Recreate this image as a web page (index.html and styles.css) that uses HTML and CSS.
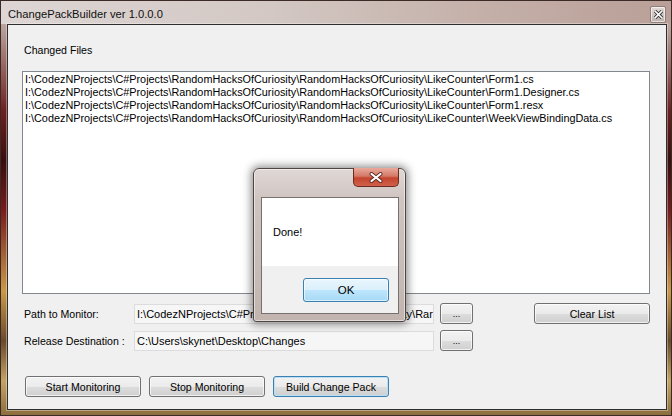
FILE: index.html
```html
<!DOCTYPE html>
<html lang="en">
<head>
    <meta charset="UTF-8">
    <title>ChangePackBuilder ver 1.0.0.0</title>
    <link rel="stylesheet" href="styles.css">
</head>
<body>

<div class="window">
    <!-- Title bar -->
    <div class="titlebar">
        <span class="title">ChangePackBuilder ver 1.0.0.0</span>
        <div class="tool-close">
            <svg width="9" height="9" viewBox="0 0 9 9">
                <path d="M1 1 L8 8 M8 1 L1 8" stroke="#3a3a3a" stroke-width="3.4" stroke-linecap="square"/>
                <path d="M1 1 L8 8 M8 1 L1 8" stroke="#ffffff" stroke-width="1.6" stroke-linecap="square"/>
            </svg>
        </div>
    </div>

    <div class="client">
        <div class="caption">Changed Files</div>

        <div class="listbox">
            <div>I:\CodezNProjects\C#Projects\RandomHacksOfCuriosity\RandomHacksOfCuriosity\LikeCounter\Form1.cs</div>
            <div>I:\CodezNProjects\C#Projects\RandomHacksOfCuriosity\RandomHacksOfCuriosity\LikeCounter\Form1.Designer.cs</div>
            <div>I:\CodezNProjects\C#Projects\RandomHacksOfCuriosity\RandomHacksOfCuriosity\LikeCounter\Form1.resx</div>
            <div>I:\CodezNProjects\C#Projects\RandomHacksOfCuriosity\RandomHacksOfCuriosity\LikeCounter\WeekViewBindingData.cs</div>
        </div>

        <div class="field-row first">
            <span class="field-label">Path to Monitor:</span>
            <div class="textbox">I:\CodezNProjects\C#Projects\RandomHacksOfCuriosity\Rar</div>
            <button class="btn browse">...</button>
            <button class="btn clear">Clear List</button>
        </div>

        <div class="field-row">
            <span class="field-label">Release Destination :</span>
            <div class="textbox">C:\Users\skynet\Desktop\Changes</div>
            <button class="btn browse">...</button>
        </div>

        <div class="actions">
            <button class="btn wide">Start Monitoring</button>
            <button class="btn wide">Stop Monitoring</button>
            <button class="btn wide default">Build Change Pack</button>
        </div>
    </div>
</div>

<!-- Message box over the main form -->
<div class="msgbox">
    <div class="msg-title">
        <div class="msg-close">
            <svg width="14" height="11" viewBox="0 0 14 11">
                <path d="M2.5 2 L11.5 9 M11.5 2 L2.5 9" stroke="#5a2a22" stroke-width="4" stroke-linecap="round"/>
                <path d="M2.5 2 L11.5 9 M11.5 2 L2.5 9" stroke="#ffffff" stroke-width="2.2" stroke-linecap="round"/>
            </svg>
        </div>
    </div>
    <div class="msg-client">
        <div class="msg-body">Done!</div>
        <div class="msg-foot">
            <button class="btn ok">OK</button>
        </div>
    </div>
</div>

</body>
</html>
```

FILE: styles.css
```css
/* Page / window frame */
body {
    margin: 0;
    width: 672px;
    height: 416px;
    overflow: hidden;
    position: relative;
    font-family: "Liberation Sans", Arial, sans-serif;
    font-size: 11px;
    color: #000;
    background: #2a1a18;
}

.window {
    width: 672px;
    height: 416px;
    box-sizing: border-box;
    border: 1px solid #3b2a26;
    background:
        linear-gradient(to bottom,
            #d2c7c3 0,
            #bba59e 24px,
            #6e2020 110px,
            #3a0e0e 160px,
            #7a1c1c 210px,
            #c99a48 290px,
            #6a4a2a 340px,
            #c4a464 380px,
            #8a6a3a 416px);
    display: flex;
    flex-direction: column;
}

.titlebar {
    height: 23px;
    display: flex;
    align-items: center;
    padding: 0 5px 0 7px;
    background: linear-gradient(to right, #ddd6d4 0, #d3c8c4 40%, #c5b1aa 70%, #b99f97 100%);
}

.title {
    font-size: 11.2px;
    color: #111;
    margin-top: 2px;
}

.tool-close {
    margin-left: auto;
    width: 14px;
    height: 15px;
    border: 1px solid #8e7f7a;
    border-radius: 2px;
    background: linear-gradient(to bottom, #e4dcd9, #bfb0ab);
    box-shadow: inset 0 0 0 1px rgba(255, 255, 255, 0.6);
    display: flex;
    align-items: center;
    justify-content: center;
    margin-top: 3px;
}

/* Client area */
.client {
    margin-left: 6px;
    width: 660px;
    height: 386px;
    box-sizing: border-box;
    border: 1px solid #2e2e2e;
    box-shadow: 0 0 0 1px rgba(255, 255, 255, 0.35);
    background: #f0f0f0;
    padding: 0 16px 0 14px;
}

.caption {
    margin-top: 18px;
    height: 14px;
    line-height: 14px;
    padding-left: 2px;
    font-size: 10.6px;
}

.listbox {
    margin-top: 14px;
    height: 223px;
    box-sizing: border-box;
    border: 1px solid #828790;
    background: #fff;
    padding: 1px 2px;
    font-size: 10.85px;
    line-height: 13px;
    white-space: nowrap;
    overflow: hidden;
}

/* Text fields */
.field-row {
    display: flex;
    align-items: flex-start;
    height: 21px;
    margin-top: 6px;
}
.field-row.first {
    margin-top: 9px;
}

.field-label {
    width: 112px;
    box-sizing: border-box;
    padding-left: 2px;
    line-height: 21px;
    font-size: 10.6px;
    margin-top: 1px;
}

.textbox {
    width: 300px;
    height: 20px;
    box-sizing: border-box;
    margin-top: 1px;
    border: 1px solid #dcdcdc;
    background: #f6f6f6;
    padding: 0 2px;
    line-height: 18px;
    white-space: nowrap;
    overflow: hidden;
}

/* Buttons, Win7 look */
.btn {
    font-family: "Liberation Sans", Arial, sans-serif;
    font-size: 10.6px;
    color: #000;
    height: 21px;
    padding: 0;
    border: 1px solid #707070;
    border-radius: 3px;
    background: linear-gradient(to bottom, #f2f2f2 0, #ebebeb 50%, #dddddd 51%, #cfcfcf 100%);
    box-shadow: inset 0 0 0 1px rgba(255, 255, 255, 0.7);
}

.browse {
    width: 33px;
    margin-left: 6px;
    font-size: 9px;
}

.clear {
    width: 116px;
    margin-left: 61px;
}

.actions {
    display: flex;
    gap: 8px;
    margin-top: 25px;
    padding-left: 3px;
}

.wide {
    width: 116px;
}

.btn.default {
    border-color: #3c7fb1;
    box-shadow: inset 0 0 0 1px #b8e0f6;
}

/* Message box */
.msgbox {
    position: absolute;
    left: 253px;
    top: 168px;
    width: 153px;
    height: 154px;
    box-sizing: border-box;
    border: 1px solid #4e4442;
    border-radius: 6px 6px 3px 3px;
    background: linear-gradient(to bottom, #e0d8d6 0, #cfc4c0 30px, #c2b5b0 100%);
    box-shadow: 0 0 8px 2px rgba(0, 0, 0, 0.45), inset 0 0 0 1px rgba(255, 255, 255, 0.5);
    padding: 0 6px 0 7px;
}

.msg-title {
    height: 28px;
    position: relative;
}

.msg-close {
    position: absolute;
    top: -1px;
    right: 0;
    width: 46px;
    height: 19px;
    box-sizing: border-box;
    border: 1px solid #6b2b22;
    border-top: none;
    border-radius: 0 0 5px 5px;
    background: linear-gradient(to bottom, #e9a99b 0, #d47a68 45%, #c4442e 55%, #d0614a 100%);
    display: flex;
    align-items: center;
    justify-content: center;
}

.msg-client {
    height: 117px;
    box-sizing: border-box;
    border: 1px solid #767170;
    background: #f0f0f0;
}

.msg-body {
    height: 68px;
    background: #fff;
    display: flex;
    align-items: center;
    padding-left: 11px;
    font-size: 11px;
}

.msg-foot {
    display: flex;
    justify-content: flex-end;
    padding: 12px 9px 0 0;
}

.btn.ok {
    width: 86px;
    height: 24px;
    font-size: 11.5px;
    border-color: #3c7fb1;
    background: linear-gradient(to bottom, #eaf6fd 0, #d9f0fc 50%, #bee6fd 51%, #a7d9f5 100%);
    box-shadow: inset 0 0 0 1px rgba(255, 255, 255, 0.6);
}
```
